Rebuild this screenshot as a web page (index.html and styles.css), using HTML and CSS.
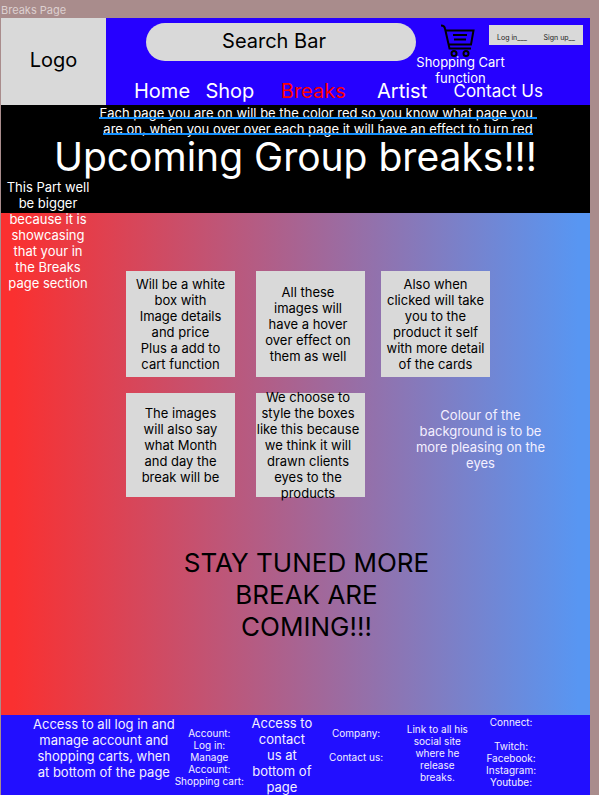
FILE: index.html
```html
<!DOCTYPE html>
<html lang="en">
<head>
<meta charset="utf-8">
<meta name="viewport" content="width=device-width, initial-scale=1">
<title>Breaks Page</title>
<link rel="stylesheet" href="styles.css">
</head>
<body>
<p class="frame-label">Breaks Page</p>
<div class="page">
  <header class="header">
    <a class="logo" href="#">Logo</a>
    <div class="header-main">
      <div class="tools">
        <input class="search" type="text" aria-label="Search" placeholder="Search Bar">
        <a class="cart" href="#">
          <svg class="cart-icon" viewBox="0 0 36 34" aria-hidden="true">
            <path d="M1 2.500Q4.500 2.500 5 5.500L9.500 25.500H31M6 7.500H33.500L31 21.500H9M13 12H27M14 16.500H26"/>
            <circle cx="14" cy="30.500" r="2.500"/>
            <circle cx="26" cy="30.500" r="2.500"/>
          </svg>
          <span>Shopping Cart<br>function</span>
        </a>
        <div class="account">
          <a href="#">Log in___</a>
          <a href="#">Sign up__</a>
        </div>
      </div>
      <nav class="nav">
        <a href="#">Home</a>
        <a href="#">Shop</a>
        <a class="current" href="#" aria-current="page">Breaks</a>
        <a href="#">Artist</a>
        <a class="contact" href="#">Contact Us</a>
      </nav>
    </div>
  </header>

  <section class="hero">
    <p class="notice"><span>Each page you are on will be the color red so you know what page you&nbsp;</span><br><span>are on, when you over over each page it will have an effect to turn red</span></p>
    <h1>Upcoming Group breaks!!!</h1>
    <p class="side-note">This Part well be bigger because it is showcasing that your in the Breaks page section</p>
  </section>

  <main class="content">
    <div class="cards">
      <article class="card">Will be a white<br>box with<br>Image details<br>and price<br>Plus a add to<br>cart function</article>
      <article class="card middle">All these<br>images will<br>have a hover<br>over effect on<br>them as well</article>
      <article class="card">Also when<br>clicked will take<br>you to the<br>product it self<br>with more detail<br>of the cards</article>
      <article class="card">The images<br>will also say<br>what Month<br>and day the<br>break will be</article>
      <article class="card middle">We choose to<br>style the boxes<br>like this because<br>we think it will<br>drawn clients<br>eyes to the<br>products</article>
      <p class="colour-note">Colour of the<br>background is to be<br>more pleasing on the<br>eyes</p>
    </div>
    <h2>STAY TUNED MORE<br>BREAK ARE<br>COMING!!!</h2>
  </main>

  <footer class="footer">
    <p class="first">Access to all log in and<br>manage account and<br>shopping carts, when<br>at bottom of the page</p>
    <p class="small lower">Account:<br>Log in:<br>Manage<br>Account:<br>Shopping cart:</p>
    <p>Access to<br>contact<br>us at<br>bottom of<br>page</p>
    <p class="small lower">Company:<br><br>Contact us:</p>
    <p class="small mid">Link to all his<br>social site<br>where he<br>release<br>breaks.</p>
    <p class="small">Connect:<br><br>Twitch:<br>Facebook:<br>Instagram:<br>Youtube:</p>
  </footer>
</div>
</body>
</html>
```

FILE: styles.css
```css
* {
  box-sizing: border-box;
}

body {
  margin: 0;
  background: #a98c8c;
  color: #000;
  font: 13px/16px Inter, "Liberation Sans", sans-serif;
}

p, h1, h2 {
  margin: 0;
  font-weight: 400;
}

a {
  color: inherit;
  text-decoration: none;
}

.frame-label {
  height: 18px;
  padding: 2px 0 0 1px;
  color: #ddd0d0;
  font-size: 11px;
}

.page {
  margin: 0 9px 0 1px;
}

/* Header */

.header {
  display: flex;
  height: 87px;
  background: #2600ff;
  color: #fff;
}

.logo {
  display: flex;
  flex: 0 0 105px;
  align-items: center;
  justify-content: center;
  padding-bottom: 4px;
  background: #d9d9d9;
  color: #000;
  font-size: 20px;
}

.header-main {
  flex: 1;
  min-width: 0;
}

.tools {
  display: flex;
  height: 61px;
  padding: 5px 7px 0 40px;
}

.search {
  flex: 1;
  min-width: 0;
  height: 38px;
  padding: 0 14px 3px 0;
  border: 0;
  border-radius: 19px;
  background: #d9d9d9;
  color: #000;
  font: inherit;
  font-size: 20px;
  text-align: center;
}

.search::placeholder {
  color: #000;
  opacity: 1;
}

.cart {
  flex: 0 0 73px;
  display: flex;
  flex-direction: column;
  align-items: center;
  text-align: center;
  white-space: nowrap;
}

.cart span {
  margin-right: -16px;
}

.cart-icon {
  flex: none;
  width: 36px;
  height: 34px;
  margin-left: 10px;
  margin-bottom: -3px;
  fill: none;
  stroke: #000;
  stroke-width: 2;
}

.account {
  display: flex;
  flex: 0 0 94px;
  height: 20px;
  margin-top: 2px;
  padding: 5px 8px 0;
  justify-content: space-between;
  background: #d9d9d9;
  color: #222;
  font-size: 7px;
}

.nav {
  display: grid;
  grid-template-columns: 72fr 76fr 97fr 77fr 86fr;
  align-items: center;
  padding: 0 47px 0 28px;
  font-size: 20px;
  line-height: 24px;
  white-space: nowrap;
}

.nav a:hover,
.nav .current {
  color: #f00;
}

.nav .contact {
  font-size: 17px;
}

/* Hero */

.hero {
  position: relative;
  height: 108px;
  background: #000;
  color: #fff;
  text-align: center;
}

.notice {
  padding-left: 45px;
  white-space: nowrap;
}

.notice span {
  display: inline-block;
  position: relative;
  vertical-align: top;
}

.notice span::after {
  content: "";
  position: absolute;
  top: 12px;
  left: 0;
  right: 0;
  height: 2px;
  background: #1490ff;
}

.hero h1 {
  font-size: 39px;
  line-height: 40px;
}

.side-note {
  position: absolute;
  top: 74px;
  left: 2px;
  width: 90px;
}

/* Content */

.content {
  padding: 58px 0 72px;
  background: linear-gradient(to right, #fa3030 2%, #5896f2 98%);
  text-align: center;
}

.cards {
  display: grid;
  grid-template-columns: 130fr 125fr 209fr;
  grid-template-rows: 106px 104px;
  row-gap: 16px;
  margin-left: 125px;
}

.card {
  display: flex;
  width: 109px;
  align-items: center;
  justify-content: center;
  background: #d9d9d9;
  white-space: nowrap;
}

.card.middle {
  padding-right: 5px;
}

.colour-note {
  padding: 14px 10px 0 0;
  color: #f4f0ff;
}

.content h2 {
  margin-top: 50px;
  padding-left: 22px;
  font-size: 26px;
  line-height: 32px;
}

/* Footer */

.footer {
  display: grid;
  grid-template-columns: 142fr 68fr 76fr 73fr 90fr 58fr;
  height: 80px;
  padding: 0 50px 0 32px;
  background: #220fff;
  color: #f4f0ff;
  text-align: center;
  white-space: nowrap;
}

.footer .first {
  padding-top: 1px;
}

.footer .small {
  padding-top: 1px;
  font-size: 10px;
  line-height: 12px;
}

.footer .mid {
  padding-top: 8px;
}

.footer .lower {
  padding-top: 12px;
}
```
